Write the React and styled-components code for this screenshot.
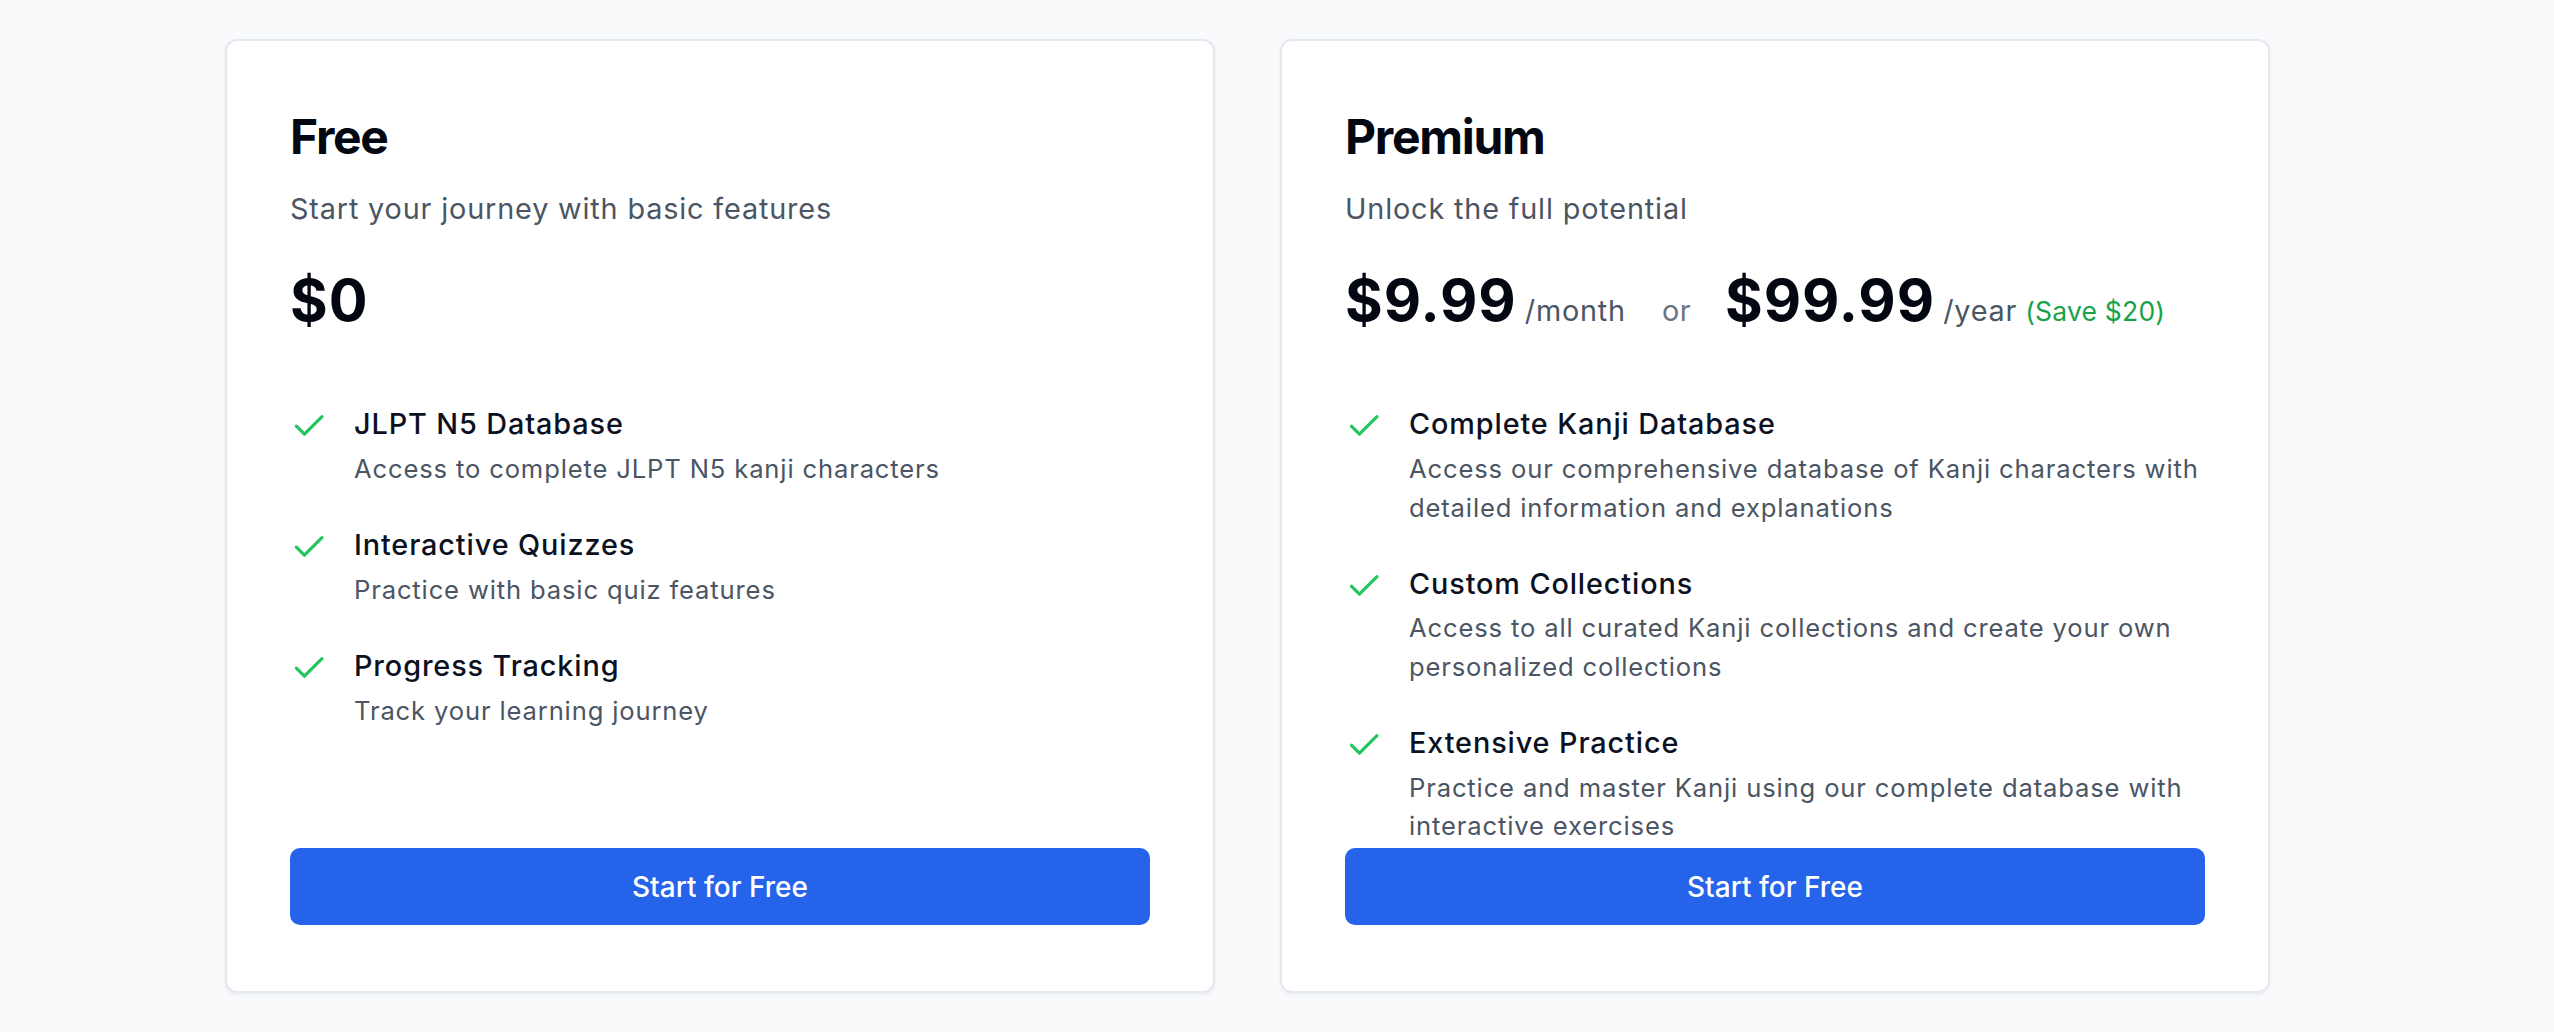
import styled, { createGlobalStyle } from 'styled-components';
import { Check } from 'lucide-react';

/* Page Pricing */

const GlobalStyle = createGlobalStyle`
  html, body {
    margin: 0;
    background: #f9fafb;
  }
  body {
    font-family: Inter, "Noto Sans", sans-serif;
  }
`;

// conteneur principal
const Page = styled.main`
  box-sizing: border-box;
  min-height: 1032px;
  padding: 39px 0 0 225px;
`;

// grille des deux offres
const Plans = styled.div`
  display: grid;
  grid-template-columns: 990px 990px;
  column-gap: 65px;
  align-items: stretch;
`;

const Card = styled.section`
  box-sizing: border-box;
  display: flex;
  flex-direction: column;
  background: #ffffff;
  border: 2px solid #e4e9f0;
  border-radius: 12px;
  box-shadow: 0 2px 4px rgba(15, 23, 42, 0.05);
  padding: 67px 63px 66px;
`;

const Title = styled.h2`
  margin: 0;
  font-size: 48px;
  line-height: 57.6px;
  font-weight: 700;
  letter-spacing: -1.3px;
  color: #030712;
`;

const Subtitle = styled.p`
  margin: 21px 0 0;
  font-size: 28.8px;
  line-height: 44.8px;
  letter-spacing: 0.85px;
  color: #4b5563;
`;

// ligne des prix
const PriceRow = styled.div`
  margin-top: 37px;
  height: 64px;
  display: flex;
  align-items: baseline;
  line-height: 64px;
`;

const Amount = styled.span`
  font-size: 57.6px;
  font-weight: 700;
  letter-spacing: 1px;
  color: #030712;
`;

const Period = styled.span`
  margin-left: 8px;
  font-size: 28.8px;
  line-height: 1;
  letter-spacing: 0.8px;
  color: #4b5563;
`;

const Or = styled.span`
  margin: 0 34px 0 36px;
  font-size: 28.8px;
  line-height: 1;
  letter-spacing: 0.5px;
  color: #6b7280;
`;

const Save = styled.span`
  margin-left: 8px;
  font-size: 26.5px;
  line-height: 1;
  letter-spacing: 0.2px;
  color: #16a34a;
`;

// liste des fonctionnalités
const Features = styled.ul`
  flex: 1;
  margin: 70px 0 3px;
  padding: 0;
  list-style: none;
  display: flex;
  flex-direction: column;
  gap: 34.6px;
`;

const Feature = styled.li`
  display: flex;
  align-items: flex-start;
  gap: 25.6px;
`;

const IconBox = styled.span`
  flex-shrink: 0;
  display: flex;
  margin-top: 5px;
  color: #22c55e;
`;

const FeatureTitle = styled.div`
  font-size: 28.8px;
  line-height: 44.8px;
  font-weight: 500;
  letter-spacing: 0.9px;
  color: #0b1120;
`;

const FeatureDesc = styled.div`
  margin-top: 3px;
  font-size: 25.6px;
  line-height: 38.4px;
  letter-spacing: 0.85px;
  color: #4b5563;
`;

const Button = styled.button`
  width: 100%;
  height: 77px;
  border: none;
  border-radius: 10px;
  background: #2563eb;
  color: #ffffff;
  font-family: inherit;
  font-size: 28px;
  font-weight: 500;
  cursor: pointer;
`;

const plans = [
  {
    name: 'Free',
    subtitle: 'Start your journey with basic features',
    features: [
      ['JLPT N5 Database', 'Access to complete JLPT N5 kanji characters'],
      ['Interactive Quizzes', 'Practice with basic quiz features'],
      ['Progress Tracking', 'Track your learning journey'],
    ],
  },
  {
    name: 'Premium',
    subtitle: 'Unlock the full potential',
    premium: true,
    features: [
      [
        'Complete Kanji Database',
        'Access our comprehensive database of Kanji characters with detailed information and explanations',
      ],
      [
        'Custom Collections',
        'Access to all curated Kanji collections and create your own personalized collections',
      ],
      [
        'Extensive Practice',
        'Practice and master Kanji using our complete database with interactive exercises',
      ],
    ],
  },
];

const Price = ({ premium }) =>
  premium ? (
    <PriceRow>
      <Amount>$9.99</Amount>
      <Period>/month</Period>
      <Or>or</Or>
      <Amount>$99.99</Amount>
      <Period>/year</Period>
      <Save>(Save $20)</Save>
    </PriceRow>
  ) : (
    <PriceRow>
      <Amount>$0</Amount>
    </PriceRow>
  );

const App = () => (
  <>
    <GlobalStyle />
    <Page>
      <Plans>
        {plans.map((plan) => (
          <Card key={plan.name}>
            <Title>{plan.name}</Title>
            <Subtitle>{plan.subtitle}</Subtitle>
            <Price premium={plan.premium} />
            <Features>
              {plan.features.map(([title, desc]) => (
                <Feature key={title}>
                  <IconBox>
                    <Check size={38.4} strokeWidth={2} />
                  </IconBox>
                  <div>
                    <FeatureTitle>{title}</FeatureTitle>
                    <FeatureDesc>{desc}</FeatureDesc>
                  </div>
                </Feature>
              ))}
            </Features>
            <Button>Start for Free</Button>
          </Card>
        ))}
      </Plans>
    </Page>
  </>
);

export default App;
